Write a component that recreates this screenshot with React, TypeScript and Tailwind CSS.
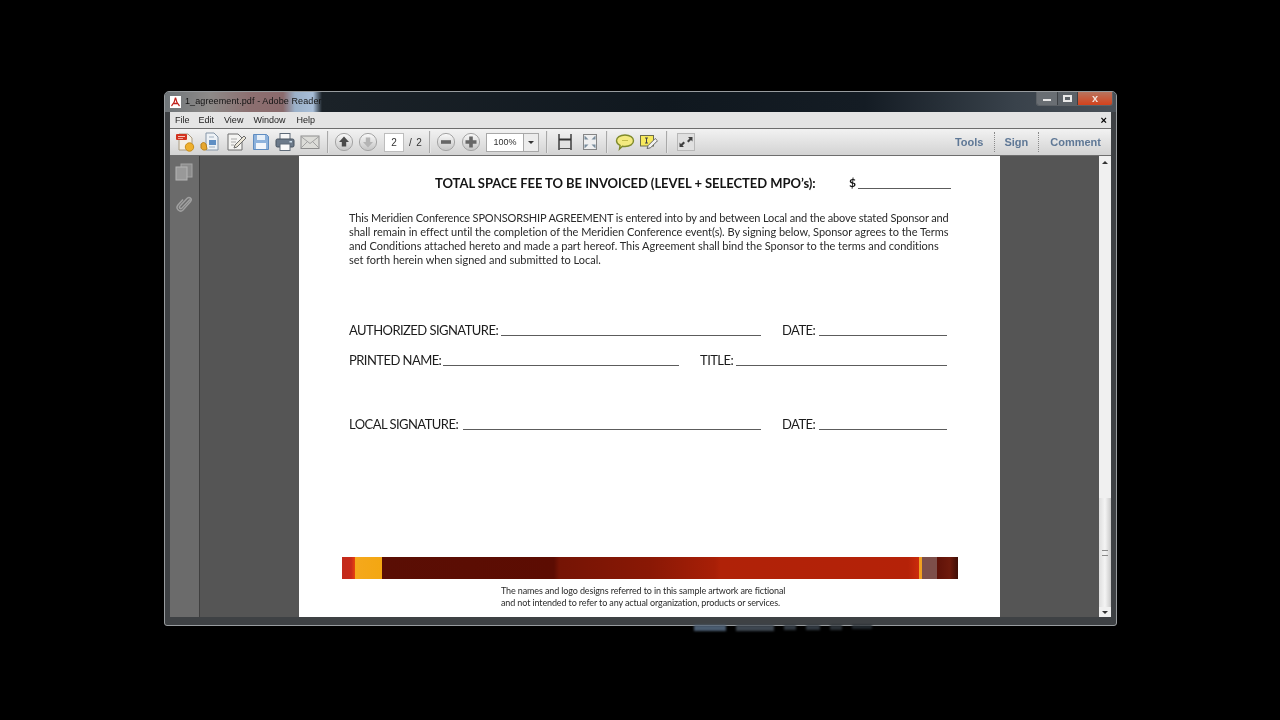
import React from "react";

const Sep = ({ ml }: { ml: string }) => <div className={`h-[22px] w-[2px] bg-[#a9a9a9] border-r border-white/70 ${ml}`} />;

const Round = ({ dir, dim, ml }: { dir: string; dim?: boolean; ml: string }) => (
  <svg width="20" height="20" viewBox="0 0 20 20" className={ml}>
    <defs>
      <linearGradient id="rg" x1="0" y1="0" x2="0" y2="1">
        <stop offset="0" stopColor="#fafafa" />
        <stop offset="1" stopColor="#c4c4c4" />
      </linearGradient>
    </defs>
    <circle cx="10" cy="10" r="8.6" fill="url(#rg)" stroke="#a4a4a4" />
    {dir === "up" && <path d="M10 4.500 L15 10 H12.200 V14.500 H7.800 V10 H5 Z" fill={dim ? "#b4b4b4" : "#4a4a4a"} />}
    {dir === "down" && <path d="M10 15.500 L15 10 H12.200 V5.500 H7.800 V10 H5 Z" fill={dim ? "#b4b4b4" : "#4a4a4a"} />}
    {dir === "minus" && <rect x="5" y="8.200" width="10" height="3.600" fill="#666" />}
    {dir === "plus" && <path d="M8.200 4.500h3.600v3.700h3.700v3.600h-3.700v3.700H8.200v-3.700H4.500V8.200h3.700z" fill="#666" />}
  </svg>
);

const IconCreate = () => (
  <svg width="22" height="22" viewBox="0 0 22 22">
    <path d="M5 3h9l4 4v12H5z" fill="#f4efe4" stroke="#a89a80" />
    <rect x="2" y="3" width="11" height="6" rx="1" fill="#d2331f" />
    <path d="M4 5h7v1H4zM4 7h5v.8H4z" fill="#f7c9bd" />
    <circle cx="15.500" cy="16" r="4.200" fill="#efb02c" stroke="#c88d1a" />
  </svg>
);
const IconCombine = () => (
  <svg width="22" height="22" viewBox="0 0 22 22">
    <path d="M7 2h8l4 4v13H7z" fill="#eef2f6" stroke="#8596a8" />
    <rect x="10" y="9" width="7" height="5" fill="#5f8fc4" />
    <path d="M10 6h5M10 16h6" stroke="#9fb0c0" />
    <path d="M2 13c2-2 3-2 5 0l1 5c-2 2-5 1-6-1z" fill="#e6a730" stroke="#b57f1c" />
  </svg>
);
const IconEdit = () => (
  <svg width="22" height="22" viewBox="0 0 22 22">
    <path d="M3 3h10l4 4v12H3z" fill="#f4f4f2" stroke="#6e6e6e" />
    <path d="M6 8h6M6 11h5M6 14h3" stroke="#aaa" />
    <path d="M9 17l1-3 9-9 2 2-9 9z" fill="#ece7d8" stroke="#6b6b6b" />
  </svg>
);
const IconSave = () => (
  <svg width="20" height="20" viewBox="0 0 20 20">
    <path d="M2.500 2.500h13l2 2v13h-15z" fill="#8db2dc" stroke="#5f8cc0" />
    <rect x="6" y="3" width="8" height="5" fill="#e6eff8" />
    <rect x="5" y="11" width="10" height="6" fill="#f2f6fb" />
  </svg>
);
const IconPrint = () => (
  <svg width="22" height="22" viewBox="0 0 22 22">
    <rect x="6" y="2.500" width="10" height="7" fill="#f7f7f7" stroke="#5f6b78" />
    <rect x="2" y="8" width="18" height="8" rx="1.500" fill="#6c7a8a" stroke="#46525f" />
    <rect x="6" y="13" width="10" height="6.500" fill="#fafafa" stroke="#5f6b78" />
    <rect x="15.500" y="10" width="2.500" height="1.500" fill="#cfe0ee" />
  </svg>
);
const IconMail = () => (
  <svg width="20" height="16" viewBox="0 0 20 16">
    <rect x="1" y="2" width="18" height="12.500" fill="#dcdcd8" stroke="#8d8d8d" />
    <path d="M1 2.500l9 7 9-7M1 14l6.500-6.500M19 14l-6.500-6.500" fill="none" stroke="#a2a2a2" />
  </svg>
);
const IconFitW = () => (
  <svg width="16" height="18" viewBox="0 0 16 18">
    <rect x="3" y="6" width="10" height="10" fill="#e2e2e2" />
    <path d="M2 1v16M14 1v16" stroke="#333" strokeWidth="1.400" />
    <path d="M2 6.500h12" stroke="#333" strokeWidth="2" />
    <path d="M2 15.500h12" stroke="#555" strokeWidth="1" />
  </svg>
);
const IconFitP = () => (
  <svg width="16" height="18" viewBox="0 0 16 18">
    <rect x="1.500" y="1.500" width="13" height="15" fill="#efefef" stroke="#858585" />
    <path d="M2.500 2.500l4 4H2.500zM13.500 2.500l-4 4h4zM2.500 15.500l4-4H2.500zM13.500 15.500l-4-4h4z" fill="#7a8e9e" />
  </svg>
);
const IconBubble = () => (
  <svg width="20" height="18" viewBox="0 0 20 18">
    <path d="M10 2c5 0 8.500 2.500 8.500 5.800S15 13.500 10 13.500c-1 0-1.800-.1-2.600-.3L4.500 16l.6-3.600C3 11.400 1.500 9.800 1.500 7.800 1.500 4.500 5 2 10 2z" fill="#f3ea80" stroke="#7f8a2c" strokeWidth="1.400" />
    <path d="M7 7.500h6" stroke="#c3bd4c" />
  </svg>
);
const IconNote = () => (
  <svg width="20" height="18" viewBox="0 0 20 18">
    <rect x="1.500" y="2.500" width="13" height="10.500" fill="#f7e95c" stroke="#6c6c4c" />
    <path d="M6 5h3M7.500 5v5M6 10h3" stroke="#444" />
    <path d="M8 15.500l1.200-3 7-7 2.300 2.300-7 7z" fill="#f2f2f2" stroke="#666" />
  </svg>
);
const IconExpand = () => (
  <svg width="18" height="18" viewBox="0 0 18 18">
    <rect x="0.500" y="0.500" width="17" height="17" fill="#e0e0e0" stroke="#b8b8b8" />
    <path d="M10 8l2.500-2.500L11 4h4.500v4.500L14 7l-2.500 2.500zM8 10l-2.500 2.500L7 14H2.500V9.500L4 11l2.500-2.500z" fill="#404040" />
  </svg>
);

const body = "font-['Lato','Liberation_Sans',sans-serif]";

const Rule = ({ w, mb = "mb-[3px]" }: { w: string; mb?: string }) => <div className={`h-px bg-[#5c5c5c] self-end ${mb} ${w}`} />;

const FormRow = ({ a, aw, l1, gap, b, bw, l2, cls }: { a: string; aw: string; l1: string; gap: string; b: string; bw: string; l2: string; cls: string }) => (
  <div className={`flex h-[18px] items-center text-[13px] leading-[18px] tracking-[-0.55px] text-[#1c1c1c] whitespace-nowrap ${cls}`}>
    <div className={aw}>{a}</div>
    <Rule w={l1} />
    <div className={`${gap} ${bw}`}>{b}</div>
    <Rule w={l2} />
  </div>
);

export default function App() {
  return (
    <div className="w-[1280px] h-[720px] bg-black overflow-hidden pt-[91px] pl-[164px] font-['Liberation_Sans',sans-serif]">
      <div className="w-[953px] h-[535px] flex flex-col rounded-t-[5px] rounded-b-[3px] border border-[#989c9f] bg-[#3e4144] px-[5px] pb-[8px] blur-[0.35px]">
        {/* title bar */}
        <div className="-mx-[5px] h-[20px] flex items-center pl-[5px] rounded-t-[4px] bg-[linear-gradient(90deg,#6f7579_0px,#8d8a88_45px,#8c6f70_85px,#8a6a6c_118px,#9ab0c8_130px,#a8bed8_148px,#1b2228_157px,#10181f_500px,#141c24_700px,#39424b_850px,#4a5158_951px)] relative">
          <div className="w-[11px] h-[12px] bg-white flex items-center justify-center">
            <svg width="9" height="10" viewBox="0 0 9 10">
              <path d="M4.500 0.500C4 4 2.500 7 0.500 9M4.500 0.500C5 4 6.500 7 8.500 9M2 6.500h5" fill="none" stroke="#c0201a" strokeWidth="1.300" />
            </svg>
          </div>
          <div className="ml-[4px] text-[9px] tracking-[0.1px] text-[#141414]">1_agreement.pdf - Adobe Reader</div>
          <div className="absolute right-[3px] top-0 flex h-[14px] w-[77px] rounded-b-[3px] border border-t-0 border-[#5c6166] overflow-hidden">
            <div className="w-[20px] bg-[#696e73] flex items-center justify-center"><div className="w-[8px] h-[2px] mt-[3px] bg-[#e8e8e8]" /></div>
            <div className="w-[20px] bg-[#5c6268] border-l border-[#3c4044] flex items-center justify-center"><div className="w-[9px] h-[7px] border-2 border-[#e8e8e8]" /></div>
            <div className="flex-1 bg-[linear-gradient(180deg,#b8745e,#d4421c)] border-l border-[#3c4044] flex items-center justify-center text-[#f3e0d8] text-[11px] font-bold leading-none">x</div>
          </div>
        </div>
        {/* menu */}
        <div className="h-[16px] flex items-center bg-[#e4e4e4] text-[9px] text-[#222] pl-[5px] pr-[4px] pt-[1px]">
          <span>File</span>
          <span className="ml-[9px]">Edit</span>
          <span className="ml-[10px]">View</span>
          <span className="ml-[10px]">Window</span>
          <span className="ml-[11px]">Help</span>
          <span className="ml-auto font-bold text-[11px] leading-none text-black">×</span>
        </div>
        {/* toolbar */}
        <div className="h-[28px] flex items-center border-t border-b border-[#6d6d6d] bg-[linear-gradient(180deg,#f2f2f2,#d3d3d3)] text-[9px] text-[#333]">
          <div className="ml-[4px] flex"><IconCreate /></div>
          <div className="ml-[3px] flex"><IconCombine /></div>
          <div className="ml-[4px] flex"><IconEdit /></div>
          <div className="ml-[4px] flex"><IconSave /></div>
          <div className="ml-[3px] flex"><IconPrint /></div>
          <div className="ml-[4px] flex"><IconMail /></div>
          <Sep ml="ml-[7px]" />
          <Round dir="up" ml="ml-[5px]" />
          <Round dir="down" dim ml="ml-[4px]" />
          <div className="ml-[6px] w-[20px] h-[19px] bg-white border border-[#bdbdbd] flex items-center justify-center text-[10px]">2</div>
          <div className="ml-[5px] w-[16px] whitespace-nowrap text-[10px] tracking-[0.8px]">/ 2</div>
          <Sep ml="ml-[4px]" />
          <Round dir="minus" ml="ml-[5px]" />
          <Round dir="plus" ml="ml-[5px]" />
          <div className="ml-[5px] w-[53px] h-[19px] bg-white border border-[#a8a8a8] flex items-center">
            <div className="w-[36px] text-center pt-[1px]">100%</div>
            <div className="flex-1 h-full border-l border-[#a8a8a8] bg-[#ececec] flex items-center justify-center"><div className="border-x-[3px] border-t-[3px] border-x-transparent border-t-[#333]" /></div>
          </div>
          <Sep ml="ml-[7px]" />
          <div className="ml-[9px] flex"><IconFitW /></div>
          <div className="ml-[9px] flex"><IconFitP /></div>
          <Sep ml="ml-[8px]" />
          <div className="ml-[7px] flex"><IconBubble /></div>
          <div className="ml-[4px] flex"><IconNote /></div>
          <Sep ml="ml-[7px]" />
          <div className="ml-[9px] flex"><IconExpand /></div>
          <div className="ml-auto flex items-center h-full text-[11px] font-bold text-[#5f7896]">
            <span>Tools</span>
            <div className="ml-[11px] h-[20px] border-l border-dotted border-[#8a8a8a]" />
            <span className="ml-[9px]">Sign</span>
            <div className="ml-[10px] h-[20px] border-l border-dotted border-[#8a8a8a]" />
            <span className="ml-[11px] mr-[10px]">Comment</span>
          </div>
        </div>
        {/* content */}
        <div className="flex-1 flex min-h-0">
          <div className="w-[30px] bg-[#6b6b6b] border-r border-[#3f3f3f] flex flex-col items-center pt-[7px] pr-[2px] gap-[14px]">
            <svg width="18" height="18" viewBox="0 0 18 18">
              <rect x="6" y="1" width="11" height="13" fill="#8c8c8c" stroke="#a5a5a5" />
              <rect x="1" y="4" width="11" height="13" fill="#999" stroke="#b5b5b5" />
            </svg>
            <svg width="18" height="18" viewBox="0 0 18 18">
              <path d="M15 4.500 7 13c-1.500 1.500-3.500-.5-2-2l7-7.500c2.500-2.500 5.500.5 3.500 3L8 15c-3 3-8-1.500-5-5l5-5.500" fill="none" stroke="#a0a0a0" strokeWidth="1.500" />
            </svg>
          </div>
          <div className="flex-1 flex bg-[#555555] min-w-0">
            <div className="ml-[99px] w-[701px] bg-white flex flex-col pl-[50px] pt-[18px] text-[#222]">
              <div className={`${body} flex h-[18px] items-center whitespace-nowrap`}>
                <div className="ml-[86px] w-[414px] text-[13px] font-bold leading-[18px] tracking-[-0.04px] text-[#141414]">TOTAL SPACE FEE TO BE INVOICED (LEVEL + SELECTED MPO’s):</div>
                <div className="text-[12px] font-bold text-[#141414] w-[9px]">$</div>
                <Rule w="w-[93px]" mb="mb-[3px]" />
              </div>
              <div className={`${body} mt-[19px] text-[11px] leading-[14px] text-[#2a2a2a] whitespace-nowrap`}>
                <div className="tracking-[-0.15px]">This Meridien Conference SPONSORSHIP AGREEMENT is entered into by and between Local and the above stated Sponsor and</div>
                <div className="tracking-[-0.03px]">shall remain in effect until the completion of the Meridien Conference event(s). By signing below, Sponsor agrees to the Terms</div>
                <div className="tracking-[-0.02px]">and Conditions attached hereto and made a part hereof. This Agreement shall bind the Sponsor to the terms and conditions</div>
                <div className="tracking-[-0.02px]">set forth herein when signed and submitted to Local.</div>
              </div>
              <div className={body}>
                <FormRow cls="mt-[54px]" a="AUTHORIZED SIGNATURE:" aw="w-[152px]" l1="w-[260px]" gap="ml-[21px]" b="DATE:" bw="w-[37px]" l2="w-[128px]" />
                <FormRow cls="mt-[12px]" a="PRINTED NAME:" aw="w-[94px]" l1="w-[236px]" gap="ml-[21px]" b="TITLE:" bw="w-[36px]" l2="w-[211px]" />
                <FormRow cls="mt-[46px]" a="LOCAL SIGNATURE:" aw="w-[114px]" l1="w-[298px]" gap="ml-[21px]" b="DATE:" bw="w-[37px]" l2="w-[128px]" />
              </div>
              <div className="mt-[124px] -ml-[7px] w-[616px] h-[22px] flex">
                <div className="w-[13px] bg-[linear-gradient(90deg,#c22a1c,#c82a1a_70%,#e8430f)]" />
                <div className="w-[27px] bg-[linear-gradient(90deg,#f5a81c,#f3a712)]" />
                <div className="flex-1 bg-[linear-gradient(90deg,#5a0e04_0%,#5c0c02_32%,#751405_33%,#8a1805_50%,#a81f07_62%,#b02208_63%,#b52208_98%,#cc2c0c_100%)]" />
                <div className="w-[3px] bg-[#f0a020]" />
                <div className="w-[15px] bg-[#7d4f4a]" />
                <div className="w-[21px] bg-[linear-gradient(90deg,#5f1208,#6e1a0c_60%,#3e0e06)]" />
              </div>
              <div className={`${body} mt-[6px] ml-[152px] text-[9px] leading-[12px] tracking-[-0.12px] text-[#2a2a2a] whitespace-nowrap`}>
                <div>The names and logo designs referred to in this sample artwork are fictional</div>
                <div>and not intended to refer to any actual organization, products or services.</div>
              </div>
            </div>
            {/* scrollbar */}
            <div className="ml-auto w-[12px] bg-[#f0f0f0] flex flex-col items-center">
              <div className="h-[12px] flex items-center"><div className="border-x-[3px] border-b-[3px] border-x-transparent border-b-[#333]" /></div>
              <div className="flex-1" />
              <div className="h-[109px] w-full bg-[linear-gradient(90deg,#dedede,#f4f4f4,#c9c9c9)] flex items-center justify-center">
                <div className="w-[6px] h-[6px] border-y border-[#8a8a8a]" />
              </div>
              <div className="h-[10px] flex items-center"><div className="border-x-[3px] border-t-[3px] border-x-transparent border-t-[#333]" /></div>
            </div>
          </div>
        </div>
      </div>
      {/* reflection of the desktop seen through the glass */}
      <div className="-mt-[1px] ml-[530px] flex gap-[10px] blur-[1px]">
        <div className="w-[32px] h-[6px] bg-[#4a5c70]" />
        <div className="w-[38px] h-[6px] bg-[#3d4650]" />
        <div className="w-[12px] h-[5px] bg-[#303840]" />
        <div className="w-[14px] h-[5px] bg-[#303840]" />
        <div className="w-[12px] h-[5px] bg-[#2a3036]" />
        <div className="w-[20px] h-[4px] bg-[#20262c]" />
      </div>
    </div>
  );
}
